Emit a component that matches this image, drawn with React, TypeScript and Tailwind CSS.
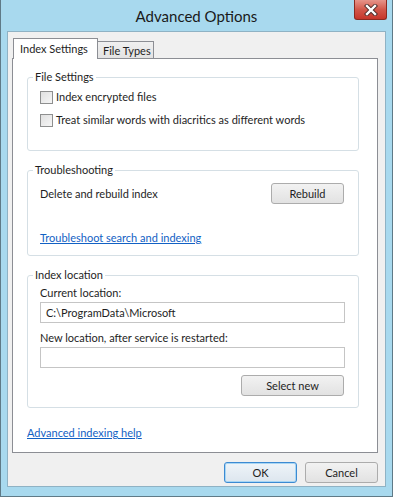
export default function App() {
  return (
    <div className="w-[393px] h-[497px] flex flex-col bg-[#a8d9ee] border-x border-b border-[#5f7a87] font-['Lato',sans-serif] text-[11px] leading-[16px] text-[#1e1e1e] overflow-hidden">
      {/* title bar */}
      <div className="relative h-[31px] shrink-0 flex items-center justify-center">
        <span className="text-[15px] leading-[20px] text-[#1a1a1a] mt-[1px]">Advanced Options</span>
        <div className="absolute top-0 right-[5px] w-[33px] h-[20px] flex items-center justify-center rounded-b-[3px] border border-t-0 border-[#8a2a20] bg-gradient-to-b from-[#e6948a] via-[#d2574a] to-[#c6352a]">
          <svg width="14" height="12" viewBox="0 0 14 12">
            <path d="M3 2 L11 10 M11 2 L3 10" stroke="#4a2a28" strokeWidth="4.2" strokeLinecap="square" />
            <path d="M3 2 L11 10 M11 2 L3 10" stroke="#ffffff" strokeWidth="2.4" strokeLinecap="square" />
          </svg>
        </div>
      </div>

      {/* client area */}
      <div className="mx-[6px] h-[456px] flex flex-col bg-[#f0f0f0] border border-[#8fb2c4]">
        {/* tabs */}
        <div className="flex items-end h-[20px] mt-[6px] ml-[5px] whitespace-nowrap">
          <div className="relative z-10 h-[21px] w-[85px] -mb-px bg-white border border-b-0 border-[#8c8e94] pl-[6px] pt-[2px] leading-[16px]">
            Index Settings
          </div>
          <div className="h-[17px] w-[57px] -ml-px bg-gradient-to-b from-[#f0f0f0] to-[#e3e3e3] border border-b-0 border-[#8c8e94] pl-[5px] pt-[1px] leading-[15px]">
            File Types
          </div>
        </div>

        {/* tab panel */}
        <div className="ml-[4px] mr-[7px] h-[395px] shrink-0 flex flex-col bg-white border border-[#8c8e94]">
          <fieldset className="mt-[10px] ml-[14px] mr-[18px] h-[82px] border border-[#d5dfe5] rounded-[3px]">
            <legend className="ml-[5px] px-[2px] leading-[16px]">File Settings</legend>
            <div className="pl-[12px]">
              <label className="flex items-center gap-[3px] h-[16px] mt-[4px]">
                <span className="w-[13px] h-[13px] border border-[#8e8f8f] bg-gradient-to-br from-[#e0e0e0] to-[#f6f6f6]" />
                <span>Index encrypted files</span>
              </label>
              <label className="flex items-center gap-[3px] h-[16px] mt-[7px]">
                <span className="w-[13px] h-[13px] border border-[#8e8f8f] bg-gradient-to-br from-[#e0e0e0] to-[#f6f6f6]" />
                <span>Treat similar words with diacritics as different words</span>
              </label>
            </div>
          </fieldset>

          <fieldset className="mt-[11px] ml-[14px] mr-[18px] h-[94px] border border-[#d5dfe5] rounded-[3px]">
            <legend className="ml-[5px] px-[2px] leading-[16px]">Troubleshooting</legend>
            <div className="pl-[12px] pr-[14px]">
              <div className="flex items-center justify-between h-[21px] mt-[5px]">
                <span>Delete and rebuild index</span>
                <button className="w-[73px] h-[21px] rounded-[3px] border border-[#acacac] bg-gradient-to-b from-[#f2f2f2] to-[#e2e2e2] leading-[16px]">
                  Rebuild
                </button>
              </div>
              <div className="mt-[26px] h-[16px]">
                <span className="text-[#1261c4] underline">Troubleshoot search and indexing</span>
              </div>
            </div>
          </fieldset>

          <fieldset className="mt-[11px] ml-[14px] mr-[18px] h-[141px] border border-[#d5dfe5] rounded-[3px]">
            <legend className="ml-[5px] px-[2px] leading-[16px]">Index location</legend>
            <div className="pl-[12px] pr-[13px]">
              <div className="mt-[2px] h-[16px]">Current location:</div>
              <div className="mt-[1px] h-[21px] border border-[#c5c5c5] bg-white pl-[5px] flex items-center">
                C:\ProgramData\Microsoft
              </div>
              <div className="mt-[7px] h-[16px]">New location, after service is restarted:</div>
              <div className="mt-[1px] h-[21px] border border-[#c5c5c5] bg-white" />
              <div className="mt-[7px] flex justify-end pr-px">
                <button className="w-[103px] h-[21px] rounded-[3px] border border-[#acacac] bg-gradient-to-b from-[#f2f2f2] to-[#e2e2e2] leading-[16px]">
                  Select new
                </button>
              </div>
            </div>
          </fieldset>

          <div className="mt-[17px] ml-[14px] h-[16px]">
            <span className="text-[#1261c4] underline">Advanced indexing help</span>
          </div>
        </div>

        {/* dialog buttons */}
        <div className="mt-[9px] mr-[7px] flex justify-end gap-[8px]">
          <button className="w-[73px] h-[21px] rounded-[3px] border border-[#3c8ad2] shadow-[inset_0_0_0_1px_#a8d6f4] bg-gradient-to-b from-[#eef4f9] to-[#dde6ee] leading-[16px]">
            OK
          </button>
          <button className="w-[73px] h-[21px] rounded-[3px] border border-[#acacac] bg-gradient-to-b from-[#f2f2f2] to-[#e2e2e2] leading-[16px]">
            Cancel
          </button>
        </div>
      </div>
    </div>
  );
}
